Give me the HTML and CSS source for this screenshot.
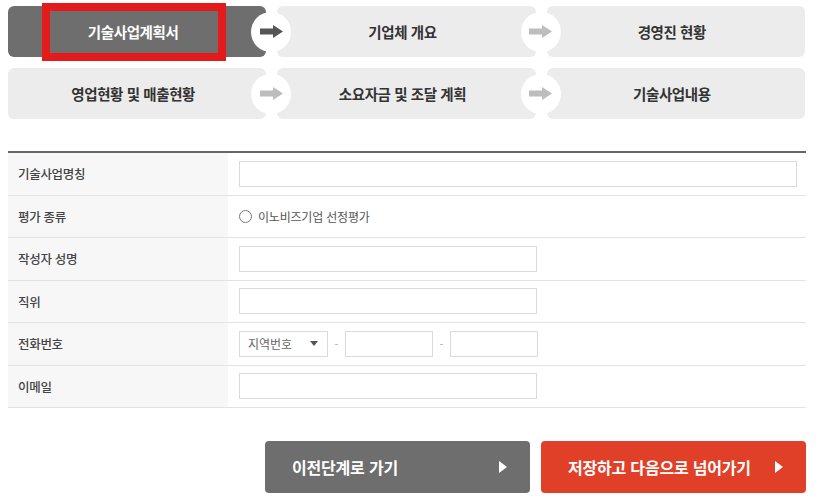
FILE: index.html
```html
<!DOCTYPE html>
<html lang="ko">
<head>
  <meta charset="UTF-8">
  <title>기술사업계획서</title>
  <link rel="stylesheet" href="styles.css">
</head>
<body>

<div class="wrap">

  <!-- 단계 표시 -->
  <ul class="steps">
    <li class="step active has-arrow">
      기술사업계획서
      <span class="mark"></span>
      <span class="arrow"><svg viewBox="0 0 23 13" width="23" height="13"><polygon points="0,3.5 13,3.5 13,0 23,6.5 13,13 13,9.5 0,9.5"/></svg></span>
    </li>
    <li class="step has-arrow">
      기업체 개요
      <span class="arrow"><svg viewBox="0 0 23 13" width="23" height="13"><polygon points="0,3.5 13,3.5 13,0 23,6.5 13,13 13,9.5 0,9.5"/></svg></span>
    </li>
    <li class="step">경영진 현황</li>
    <li class="step has-arrow">
      영업현황 및 매출현황
      <span class="arrow"><svg viewBox="0 0 23 13" width="23" height="13"><polygon points="0,3.5 13,3.5 13,0 23,6.5 13,13 13,9.5 0,9.5"/></svg></span>
    </li>
    <li class="step has-arrow">
      소요자금 및 조달 계획
      <span class="arrow"><svg viewBox="0 0 23 13" width="23" height="13"><polygon points="0,3.5 13,3.5 13,0 23,6.5 13,13 13,9.5 0,9.5"/></svg></span>
    </li>
    <li class="step">기술사업내용</li>
  </ul>

  <!-- 입력 폼 -->
  <div class="form-table">
    <div class="row">
      <div class="label">기술사업명칭</div>
      <div class="field"><input type="text" class="inp inp-full"></div>
    </div>
    <div class="row">
      <div class="label">평가 종류</div>
      <div class="field">
        <label class="radio"><span class="radio-dot"></span>이노비즈기업 선정평가</label>
      </div>
    </div>
    <div class="row">
      <div class="label">작성자 성명</div>
      <div class="field"><input type="text" class="inp"></div>
    </div>
    <div class="row">
      <div class="label">직위</div>
      <div class="field"><input type="text" class="inp"></div>
    </div>
    <div class="row">
      <div class="label">전화번호</div>
      <div class="field phone">
        <div class="select">지역번호 <span class="caret"></span></div>
        <span class="dash">-</span>
        <input type="text" class="inp inp-small">
        <span class="dash">-</span>
        <input type="text" class="inp inp-small">
      </div>
    </div>
    <div class="row">
      <div class="label">이메일</div>
      <div class="field"><input type="text" class="inp"></div>
    </div>
  </div>

  <!-- 버튼 -->
  <div class="btn-area">
    <button type="button" class="btn btn-prev">이전단계로 가기 <span class="tri"></span></button>
    <button type="button" class="btn btn-next">저장하고 다음으로 넘어가기 <span class="tri"></span></button>
  </div>

</div>

</body>
</html>
```

FILE: styles.css
```css
* {
  box-sizing: border-box;
}

body {
  margin: 0;
  background: #fff;
  font-family: "Noto Sans CJK KR", "Noto Sans", sans-serif;
  color: #333;
}

.wrap {
  width: 798px;
  margin-left: 8px;
  padding-top: 6px;
}

/* steps */
.steps {
  list-style: none;
  margin: 0;
  padding: 0;
  width: 797px;
  display: grid;
  grid-template-columns: repeat(3, 1fr);
  column-gap: 11px;
  row-gap: 11px;
}

.step {
  position: relative;
  height: 51px;
  display: flex;
  align-items: center;
  justify-content: center;
  padding-right: 8px;
  background: #ececec;
  border-radius: 6px;
  font-size: 14.5px;
  font-weight: 700;
  letter-spacing: -0.4px;
  color: #333;
}

.step.active {
  background: #6e6e6e;
  color: #fff;
}

.step .arrow {
  position: absolute;
  top: 50%;
  right: -25px;
  width: 40px;
  height: 40px;
  margin-top: -20px;
  border-radius: 50%;
  background: #fff;
  display: flex;
  align-items: center;
  justify-content: center;
  z-index: 2;
}

.step .arrow svg {
  fill: #bdbdbd;
}

.step.active .arrow svg {
  fill: #555;
}

/* red highlight frame */
.step .mark {
  position: absolute;
  left: 34px;
  top: -3px;
  width: 184px;
  height: 58px;
  border: 8px solid #e31b1b;
}

/* form table */
.form-table {
  margin-top: 32px;
  border-top: 2px solid #666;
}

.row {
  display: grid;
  grid-template-columns: 220px 1fr;
  height: 42.5px;
  border-bottom: 1px solid #e3e3e3;
}

.label {
  display: flex;
  align-items: center;
  padding-left: 10px;
  background: #f7f7f7;
  font-size: 12.5px;
  font-weight: 500;
  color: #444;
  letter-spacing: -0.3px;
}

.field {
  display: flex;
  align-items: center;
  padding-left: 11px;
}

.inp {
  width: 298px;
  height: 26px;
  border: 1px solid #dadada;
  background: #fff;
  padding: 0 6px;
  font-family: inherit;
}

.inp-full {
  width: 558px;
}

.inp-small {
  width: 88px;
}

.radio {
  display: flex;
  align-items: center;
  font-size: 12px;
  color: #555;
  letter-spacing: -0.2px;
}

.radio-dot {
  width: 13px;
  height: 13px;
  border: 1px solid #777;
  border-radius: 50%;
  margin-right: 6px;
}

.select {
  width: 89px;
  height: 26px;
  border: 1px solid #dadada;
  display: flex;
  align-items: center;
  justify-content: space-between;
  padding: 0 9px 0 8px;
  font-size: 12px;
  color: #666;
}

.caret {
  width: 0;
  height: 0;
  border-left: 4px solid transparent;
  border-right: 4px solid transparent;
  border-top: 5px solid #555;
}

.dash {
  width: 17px;
  text-align: center;
  font-size: 11px;
  color: #aaa;
}

/* buttons */
.btn-area {
  display: flex;
  justify-content: flex-end;
  gap: 11px;
  margin-top: 33px;
}

.btn {
  width: 265px;
  height: 52px;
  border: none;
  border-radius: 4px;
  display: flex;
  align-items: center;
  justify-content: space-between;
  padding: 0 23px 0 27px;
  font-family: inherit;
  font-size: 16px;
  font-weight: 700;
  letter-spacing: -0.2px;
  color: #fff;
  cursor: pointer;
}

.btn-prev {
  background: #6e6e6e;
}

.btn-next {
  background: #e04027;
}

.tri {
  width: 0;
  height: 0;
  border-top: 6px solid transparent;
  border-bottom: 6px solid transparent;
  border-left: 8px solid #fff;
}
```
